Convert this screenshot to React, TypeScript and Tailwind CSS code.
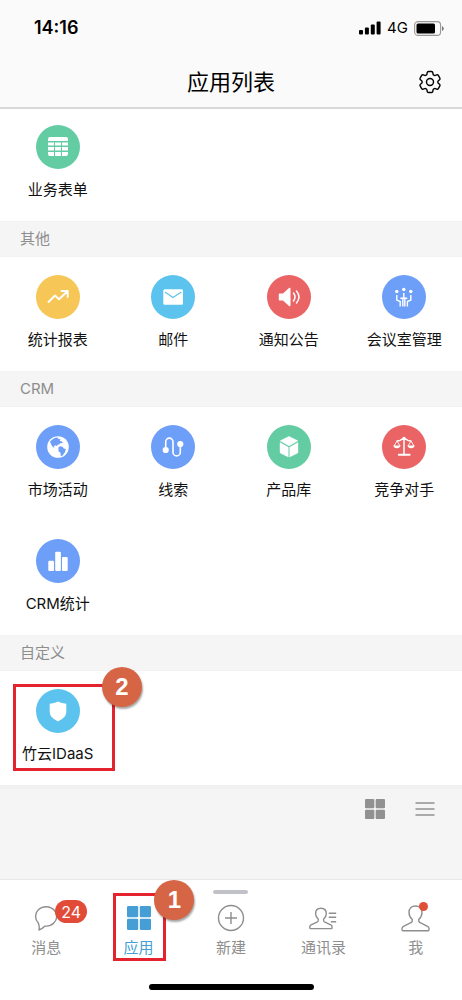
import React from "react";
import { HiOutlineCog6Tooth } from "react-icons/hi2";

interface AppItem {
    name: string;
    color: string;
    icon: React.ReactNode;
    step?: number;
}

interface Section {
    title?: string;
    items: AppItem[];
}

const GREEN = "bg-[#63cca3]";
const YELLOW = "bg-[#f6c656]";
const CYAN = "bg-[#5bc3ed]";
const RED = "bg-[#ea6365]";
const BLUE = "bg-[#6d9ef8]";

const sections: Section[] = [
    {
        items: [
            {
                name: "业务表单",
                color: GREEN,
                icon: (
                    <>
                        <path d="M1 5V3q0-2 2-2h16q2 0 2 2v2z" fill="#fff" />
                        <path d="M1 6.500h6v3H1zM8 6.500h6v3H8zM15 6.500h6v3h-6zM1 11h6v3.500H1zM8 11h6v3.500H8zM15 11h6v3.500h-6zM1 16h6v4H3q-2 0-2-2zM8 16h6v4H8zM15 16h6v2q0 2-2 2h-4z" fill="#fff" />
                    </>
                ),
            },
        ],
    },
    {
        title: "其他",
        items: [
            {
                name: "统计报表",
                color: YELLOW,
                icon: <path d="M1.500 16 8 9.500l4 3.800L20.500 5.200M14.500 5h6.200v6" fill="none" stroke="#fff" strokeWidth="1.900" strokeLinecap="round" strokeLinejoin="round" />,
            },
            {
                name: "邮件",
                color: CYAN,
                icon: (
                    <>
                        <rect x="1.300" y="3.300" width="19.700" height="15.500" rx="1.500" fill="#fff" />
                        <path d="m3 6 8 5.500L19.300 6" fill="none" stroke="#5bc3ed" strokeWidth="1.100" />
                    </>
                ),
            },
            {
                name: "通知公告",
                color: RED,
                icon: (
                    <>
                        <path d="M1.500 7.500H5L11 2q1.500-1 1.500 1v16q0 2-1.500 1l-6-5.500H1.500q-.7 0-.7-.8V8.300q0-.8.7-.8z" fill="#fff" />
                        <path d="M15.500 7q3 4 0 8M18.500 5q5 6 0 12" fill="none" stroke="#fff" strokeWidth="1.500" strokeLinecap="round" />
                    </>
                ),
            },
            {
                name: "会议室管理",
                color: BLUE,
                icon: (
                    <>
                        <circle cx="3.800" cy="5.500" r="1.700" fill="#fff" />
                        <circle cx="10.800" cy="3.500" r="1.700" fill="#fff" />
                        <circle cx="17.800" cy="5.500" r="1.700" fill="#fff" />
                        <path d="M3.800 9v5.200l3.400 1.300v5M17.800 9v5.200l-3.400 1.300v5M10.800 7v5M7.300 12.200h7M9.800 12.500v8M11.800 12.500v8" fill="none" stroke="#fff" strokeWidth="1.400" strokeLinejoin="round" />
                    </>
                ),
            },
        ],
    },
    {
        title: "CRM",
        items: [
            {
                name: "市场活动",
                color: BLUE,
                icon: (
                    <>
                        <circle cx="11" cy="11" r="10.800" fill="#fff" />
                        <path d="M3 5.700q3-4 7.500-4.200l1 1.500 2 .3-.7 1.600 2.300.5.7 1.600-2.700.3-1 1.200-1.600.2L10 10l-2-.8-1.200 1.300.9 1L6 11.300 4.200 8.500zM11.500 11.300l1.500-1.100 2.500.6 1.300 1.700 2 .5-.7 3-2.500 3.600-1.800.7-.3-3.500-2-1.500z" fill="#6d9ef8" />
                    </>
                ),
            },
            {
                name: "线索",
                color: BLUE,
                icon: (
                    <>
                        <circle cx="3.700" cy="14" r="3.100" fill="#fff" />
                        <circle cx="18.300" cy="8" r="3.100" fill="#fff" />
                        <path d="M3.700 14V5.800a3.650 3.650 0 0 1 7.300 0v10.400a3.650 3.650 0 0 0 7.300 0V8" fill="none" stroke="#fff" strokeWidth="1.600" />
                    </>
                ),
            },
            {
                name: "产品库",
                color: GREEN,
                icon: (
                    <>
                        <path d="m11 .5 8.700 4.300L11 9.800 2.300 4.800z" fill="#fff" stroke="#fff" strokeWidth=".6" strokeLinejoin="round" />
                        <path d="m2 6.500 8.300 4.700V21L2.600 17.200q-.6-.3-.6-1zM20 6.500l-8.300 4.700V21l7.700-3.800q.6-.3.6-1z" fill="#fff" stroke="#fff" strokeWidth=".4" strokeLinejoin="round" />
                    </>
                ),
            },
            {
                name: "竞争对手",
                color: RED,
                icon: (
                    <>
                        <path d="M11 2v17M4 5q3 0 4.500-1.500Q11 2 13.500 3.500 15 5 18 5" fill="none" stroke="#fff" strokeWidth="1.500" strokeLinecap="round" />
                        <path d="m4 5-3 5M4 5l3 5M18 5l-3 5M18 5l3 5" fill="none" stroke="#fff" strokeWidth=".9" />
                        <path d="M.3 9.500h7.200q-.5 2.800-3.600 2.800T.3 9.500zM14.500 9.500h7.200q-.5 2.800-3.600 2.800t-3.600-2.800z" fill="#fff" />
                        <rect x="4.800" y="17.800" width="12.800" height="2" rx="1" fill="#fff" />
                        <circle cx="11" cy="2.500" r="1.700" fill="#fff" />
                    </>
                ),
            },
            {
                name: "CRM统计",
                color: BLUE,
                icon: (
                    <>
                        <rect x="1.300" y="10.700" width="5.700" height="10.300" rx="1" fill="#fff" />
                        <rect x="8.200" y="1.700" width="5.700" height="19.300" rx="1" fill="#fff" />
                        <rect x="15" y="7" width="5.700" height="14" rx="1" fill="#fff" />
                    </>
                ),
            },
        ],
    },
    {
        title: "自定义",
        items: [
            {
                name: "竹云IDaaS",
                color: CYAN,
                icon: <path d="M11 1.500q3.500 2 8.300 2.300V12q0 5.500-8.300 9.500Q2.700 17.500 2.700 12V3.800Q7.500 3.500 11 1.500z" fill="#fff" />,
                step: 2,
            },
        ],
    },
];

const Step = ({ n, className }: { n: number; className: string }) => (
    <span className={`absolute flex size-10 items-center justify-center rounded-full bg-[#d66546] font-['Liberation_Sans',sans-serif] text-2xl font-bold text-white shadow-[1px_2px_2px_rgba(0,0,0,0.35)] ${className}`}>
        {n}
    </span>
);

const AppTile = ({ item }: { item: AppItem }) => (
    <button type="button" className="relative flex flex-col items-center pt-[18px] pb-[19px]">
        <span className={`flex size-11 items-center justify-center rounded-full ${item.color}`}>
            <svg viewBox="0 0 22 22" className="size-[22px]" aria-hidden="true">
                {item.icon}
            </svg>
        </span>
        <span className="mt-[9px] text-[15px] leading-6 whitespace-nowrap text-[#111]">{item.name}</span>
        {item.step && (
            <span className="absolute top-[13px] left-[13px] h-[87px] w-[102px] border-3 border-[#e3232e]">
                <Step n={item.step} className="-top-5 left-[86px]" />
            </span>
        )}
    </button>
);

const StatusBar = () => (
    <div className="flex h-14 items-center justify-between pr-[18px] pl-[34px]">
        <span className="text-lg font-semibold">14:16</span>
        <div className="flex items-center gap-1.5">
            <svg viewBox="0 0 22 14" className="h-3.5 w-[22px]" aria-hidden="true">
                <rect x="0" y="9" width="4" height="4.500" rx="1" />
                <rect x="5.900" y="6.500" width="4" height="7" rx="1" />
                <rect x="11.800" y="3.500" width="4" height="10" rx="1" />
                <rect x="17.600" y=".5" width="4" height="13" rx="1" />
            </svg>
            <span className="text-[15px]">4G</span>
            <svg viewBox="0 0 30 15" className="h-[15px] w-[30px]" aria-hidden="true">
                <rect x=".6" y=".6" width="26" height="13.800" rx="3.500" fill="none" stroke="#999" strokeWidth="1.100" />
                <rect x="2.500" y="2.500" width="18.500" height="10" rx="1.500" />
                <path d="M28 5v5q1.800-1 1.800-2.500T28 5z" fill="#777" />
            </svg>
        </div>
    </div>
);

const person = "M11.300 14.500q.2 2.300-1 3L2.500 21.300Q1 22 1 23.500v1.300q0 1 1 1h25q1 0 1-1v-1.300q0-1.500-1.500-2.200l-7.800-3.800q-1.200-.7-1-3c2.300-2 3.300-4.500 3.300-7 0-4-2.500-6.500-6.500-6.500S8 3.500 8 7.500c0 2.500 1 5 3.300 7z";

const GridIcon = ({ className }: { className: string }) => (
    <svg viewBox="0 0 24 24" className={className} fill="currentColor" aria-hidden="true">
        <rect x="0" y="0" width="11.200" height="11.200" rx="1.200" />
        <rect x="12.800" y="0" width="11.200" height="11.200" rx="1.200" />
        <rect x="0" y="12.800" width="11.200" height="11.200" rx="1.200" />
        <rect x="12.800" y="12.800" width="11.200" height="11.200" rx="1.200" />
    </svg>
);

const tabs = [
    {
        name: "消息",
        unread: 24,
        icon: (
            <svg viewBox="0 0 24 25" className="h-[25px] w-6" fill="none" stroke="currentColor" strokeWidth="1.400" aria-hidden="true">
                <path d="M4.300 16.900A10.500 9.700 0 1 1 11 20.100Q8.500 22.800 5 24q.7-3.500-.7-7.100z" strokeLinejoin="round" />
            </svg>
        ),
    },
    { name: "应用", active: true, step: 1, icon: <GridIcon className="size-6" /> },
    {
        name: "新建",
        handle: true,
        icon: (
            <svg viewBox="0 0 28 28" className="size-7" fill="none" stroke="currentColor" strokeWidth="1.400" aria-hidden="true">
                <circle cx="14" cy="14" r="12.500" />
                <path d="M14 8v12M8 14h12" />
            </svg>
        ),
    },
    {
        name: "通讯录",
        icon: (
            <svg viewBox="0 0 34 27" className="h-[23px] w-7" fill="none" stroke="currentColor" strokeWidth="1.700" aria-hidden="true">
                <path d={person} />
                <path d="M24 7h9M24 12h9M26.500 17.500H33" strokeWidth="1.800" />
            </svg>
        ),
    },
    {
        name: "我",
        dot: true,
        icon: (
            <svg viewBox="0 0 29 27" className="h-[27px] w-[29px]" fill="none" stroke="currentColor" strokeWidth="1.400" aria-hidden="true">
                <path d={person} />
            </svg>
        ),
    },
];

export default function App() {
    return (
        <div className="flex min-h-screen flex-col bg-white font-['Inter','Noto_Sans_CJK_SC',sans-serif] text-black">
            {/* Header */}
            <header className="relative z-10 border-b-2 border-[#d9d9d9] bg-[#fafafa]">
                <StatusBar />
                <div className="grid h-[51px] grid-cols-[1fr_auto_1fr] items-center px-[18px]">
                    <h1 className="col-start-2 text-[22px] leading-8">应用列表</h1>
                    <button type="button" aria-label="设置" className="justify-self-end">
                        <HiOutlineCog6Tooth className="size-7" strokeWidth={1.2} />
                    </button>
                </div>
            </header>

            {/* App list, scrolled slightly under the header */}
            <main className="-mt-0.5 flex flex-1 flex-col">
                {sections.map((section, idx) => (
                    <section key={idx}>
                        {section.title && (
                            <h2 className="h-9 border-y border-[#f2f2f2] bg-[#f5f5f5] px-5 text-[15px] leading-[34px] text-[#8e8e8e]">
                                {section.title}
                            </h2>
                        )}
                        <div className="grid grid-cols-4">
                            {section.items.map((item) => (
                                <AppTile key={item.name} item={item} />
                            ))}
                        </div>
                    </section>
                ))}
                <div className="flex flex-1 items-start justify-end gap-[30px] border-t-4 border-[#f1f1f1] bg-[#f5f5f5] pt-2.5 pr-[27px] text-[#919191]">
                    <button type="button" aria-label="网格视图">
                        <GridIcon className="size-5" />
                    </button>
                    <button type="button" aria-label="列表视图">
                        <svg viewBox="0 0 20 20" className="size-5" stroke="currentColor" strokeWidth="1.400" aria-hidden="true">
                            <path d="M.5 4h19M.5 10h19M.5 16h19" />
                        </svg>
                    </button>
                </div>
            </main>

            {/* Tab bar */}
            <footer className="border-t border-[#e8e8e8] bg-white">
                <nav className="grid grid-cols-5">
                    {tabs.map((tab) => (
                        <button
                            key={tab.name}
                            type="button"
                            className={`relative flex flex-col items-center pt-6 ${tab.active ? "text-[#459fd5]" : "text-[#8e8e8e]"}`}
                        >
                            {tab.handle && <span className="absolute top-2.5 h-1 w-[35px] rounded-full bg-[#c1c1c8]" />}
                            <span className="relative flex h-7 items-center justify-center">
                                {tab.icon}
                                {tab.unread && (
                                    <span className="absolute -top-1 left-[21px] flex h-[23px] w-8 items-center justify-center rounded-full bg-[#e24b37] text-base text-white">
                                        {tab.unread}
                                    </span>
                                )}
                                {tab.dot && <span className="absolute -top-0.5 right-0.5 size-[9px] rounded-full bg-[#e04f38]" />}
                            </span>
                            <span className="mt-1 text-[15px] leading-6">{tab.name}</span>
                            {tab.step && (
                                <span className="absolute top-[13px] left-[21px] h-[68px] w-[53px] border-3 border-[#e3232e]">
                                    <Step n={tab.step} className="-top-4 left-[38px]" />
                                </span>
                            )}
                        </button>
                    ))}
                </nav>
                <div className="mx-auto mt-6 mb-2.5 h-1.5 w-[165px] rounded-full bg-black" />
            </footer>
        </div>
    );
}
